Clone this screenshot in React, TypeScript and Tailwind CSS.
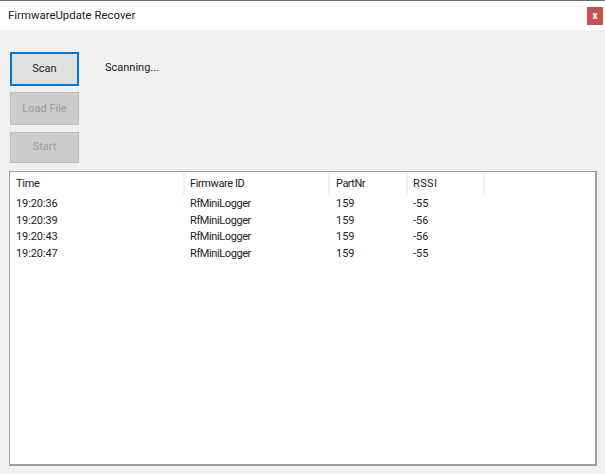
const columns = [
  { label: 'Time', width: 'w-[175px]', pad: 'pl-[6px] tracking-[-0.3px]' },
  { label: 'Firmware ID', width: 'w-[145px]', pad: 'pl-[5px] tracking-[-0.4px]' },
  { label: 'PartNr', width: 'w-[78px]', pad: 'pl-[6px] tracking-[-0.5px]' },
  { label: 'RSSI', width: 'w-[77px]', pad: 'pl-[5px] tracking-[0.4px]' },
];

const rows = [
  ['19:20:36', 'RfMiniLogger', '159', '-55'],
  ['19:20:39', 'RfMiniLogger', '159', '-56'],
  ['19:20:43', 'RfMiniLogger', '159', '-56'],
  ['19:20:47', 'RfMiniLogger', '159', '-55'],
];

function DisabledButton({ label, height, nudge }: { label: string; height: string; nudge: string }) {
  return (
    <button
      disabled
      className={`w-[69px] ${height} bg-[#cccccc] border border-[#bfbfbf] text-[#9a9a9a] text-[11px]`}
    >
      <span className={`block ${nudge}`}>{label}</span>
    </button>
  );
}

export default function App() {
  return (
    <div className="w-[605px] h-[474px] flex flex-col bg-[#f0f0f0] text-[#222222] text-[11px] font-['Roboto','Open_Sans',sans-serif] overflow-hidden">
      <div className="h-[30px] shrink-0 bg-white border-t border-[#6e6e6e] flex items-center justify-between pl-2 pr-[2px]">
        <span className="text-[11.4px]">FirmwareUpdate Recover</span>
        <button className="w-[16px] h-[18px] mt-[1px] bg-[#c75050] text-white text-[10px] font-bold leading-none flex items-center justify-center">
          x
        </button>
      </div>

      <div className="flex pl-[10px] pt-[22px]">
        <div className="flex flex-col w-[69px]">
          <button className="w-[69px] h-[34px] bg-[#e1e1e1] border-2 border-[#0078d7] text-[11px]">
            <span className="block mt-[1px]">Scan</span>
          </button>
          <div className="h-[6px]" />
          <DisabledButton label="Load File" height="h-[33px]" nudge="mt-[1px]" />
          <div className="h-[7px]" />
          <DisabledButton label="Start" height="h-[31px]" nudge="mt-0" />
        </div>
        <span className="ml-[26px] mt-[7px] leading-[18px]">Scanning...</span>
      </div>

      <div className="ml-[9px] mt-[8px] w-[588px] h-[295px] bg-white border border-[#a0a0a0] border-b-2 border-r-2">
        <div className="flex h-[23px] pt-[1px]">
          {columns.map((c) => (
            <div key={c.label} className={`${c.width} border-r-2 border-[#f0f0f0] flex items-center`}>
              <span className={`block mt-[1px] ${c.pad}`}>{c.label}</span>
            </div>
          ))}
        </div>
        <div className="pt-[1px]">
          {rows.map((r) => (
            <div key={r[0]} className="flex h-[16.5px] items-center">
              <div className="w-[175px] pl-[6px] tracking-[-0.1px]">{r[0]}</div>
              <div className="w-[145px] pl-[5px] tracking-[-0.4px]">{r[1]}</div>
              <div className="w-[78px] pl-[6px]">{r[2]}</div>
              <div className="w-[77px] pl-[5px]">{r[3]}</div>
            </div>
          ))}
        </div>
      </div>
    </div>
  );
}
